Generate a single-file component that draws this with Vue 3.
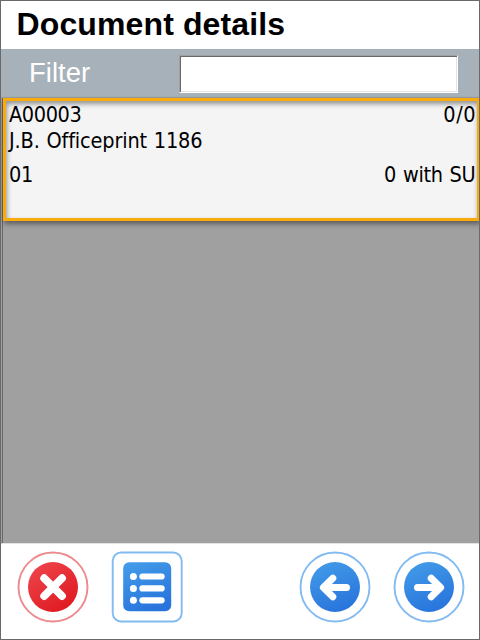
<script setup>
const rows = [
  { left: 'A00003', right: '0/0', kind: 'first' },
  { left: 'J.B. Officeprint 1186', right: '', kind: 'second' },
  { left: '01', right: '0 with SU', kind: 'third' },
]
</script>

<template>
  <div class="screen">
    <header class="title">Document details</header>
    <div class="filter">
      <label class="filter-label" for="filter">Filter</label>
      <input id="filter" class="filter-input" type="text" />
    </div>
    <main class="list">
      <div class="card">
        <div v-for="row in rows" :key="row.kind" class="row" :class="row.kind">
          <span>{{ row.left }}</span>
          <span class="right">{{ row.right }}</span>
        </div>
      </div>
    </main>
    <footer class="actions">
      <svg width="0" height="0" class="defs">
        <defs>
          <linearGradient id="red" x1="0" y1="0" x2="0.7" y2="1">
            <stop offset="0" stop-color="#f0484e" />
            <stop offset="1" stop-color="#df1a22" />
          </linearGradient>
          <linearGradient id="blue" x1="0.2" y1="0" x2="0.6" y2="1">
            <stop offset="0" stop-color="#429be8" />
            <stop offset="1" stop-color="#2874dc" />
          </linearGradient>
        </defs>
      </svg>
      <button class="action" aria-label="Cancel">
        <svg viewBox="0 0 72 72">
          <circle cx="36" cy="36" r="34.5" fill="#fff" stroke="#ed8a8e" stroke-width="1.9" />
          <circle cx="36" cy="36" r="25" fill="url(#red)" />
          <path d="M27.2 27.2L45 45M45 27.2L27.2 45" class="cross" />
        </svg>
      </button>
      <button class="action list-btn" aria-label="List">
        <svg viewBox="0 0 72 72">
          <rect x="1.7" y="1.5" width="69" height="69" rx="8.5" fill="#fff" stroke="#82bbf1" stroke-width="1.9" />
          <rect x="12.2" y="11.2" width="48" height="49" rx="6" fill="url(#blue)" />
          <g fill="#fff">
            <circle cx="22.4" cy="25.5" r="3.5" /><circle cx="22.4" cy="37.4" r="3.5" /><circle cx="22.4" cy="49.3" r="3.5" />
            <rect x="28.3" y="22.4" width="25.4" height="6.2" rx="3.1" />
            <rect x="28.3" y="34.3" width="25.4" height="6.2" rx="3.1" />
            <rect x="28.3" y="46.2" width="25.4" height="6.2" rx="3.1" />
          </g>
        </svg>
      </button>
      <button class="action back" aria-label="Back">
        <svg viewBox="0 0 72 72">
          <circle cx="36" cy="36" r="34.5" fill="#fff" stroke="#82bbf1" stroke-width="1.9" />
          <circle cx="36" cy="36" r="25" fill="url(#blue)" />
          <path d="M47.5 36.5H25M33.8 27.3L24.4 36.5L33.8 45.7" class="arrow" />
        </svg>
      </button>
      <button class="action next" aria-label="Next">
        <svg viewBox="0 0 72 72">
          <circle cx="36" cy="36" r="34.5" fill="#fff" stroke="#82bbf1" stroke-width="1.9" />
          <circle cx="36" cy="36" r="25" fill="url(#blue)" />
          <path d="M24.5 36.5H47M38.2 27.3L47.6 36.5L38.2 45.7" class="arrow" />
        </svg>
      </button>
    </footer>
  </div>
</template>

<style>
body {
  margin: 0;
  background: #fff;
}
</style>

<style scoped>
.screen {
  box-sizing: border-box;
  width: 480px;
  height: 640px;
  border: 1px solid #696969;
  display: flex;
  flex-direction: column;
  overflow: hidden;
  background: #fff;
  font-family: "Liberation Sans", sans-serif;
}
.title {
  height: 48px;
  box-sizing: border-box;
  padding-left: 15.5px;
  font-size: 32px;
  font-weight: bold;
  line-height: 46px;
  letter-spacing: 0.12px;
  color: #000;
}
.filter {
  height: 48px;
  box-sizing: border-box;
  display: flex;
  align-items: flex-start;
  padding: 6px 0 0 28px;
  background: #a7b1b9;
}
.filter-label {
  width: 150px;
  font-size: 27.5px;
  line-height: 35px;
  color: #fff;
}
.filter-input {
  box-sizing: border-box;
  width: 279px;
  height: 38px;
  padding: 0 6px;
  border: 1px solid;
  border-color: #a0a0a0 #fff #fff #a0a0a0;
  border-radius: 0;
  background: #fff;
  box-shadow: inset 1px 1px #696969, inset -1px -1px #e3e3e3;
  font-size: 24px;
  outline: none;
}
.list {
  height: 447px;
  box-sizing: border-box;
  border-top: 1px solid #9b9da0;
  border-left: 1px solid #a0a0a0;
  border-bottom: 1px solid #e3e3e3;
  background: #a0a0a0;
  box-shadow: inset 1px 0 #696969;
  padding-left: 1px;
}
.card {
  box-sizing: border-box;
  width: 477px;
  height: 123px;
  border: 3px solid #faab0c;
  background: #f4f4f4;
  padding: 0 1px 0 3px;
  box-shadow: 1px 3px 5px rgba(0, 0, 0, 0.42), inset 1px 3px 5px rgba(0, 0, 0, 0.4);
  font-family: "DejaVu Sans Condensed", "DejaVu Sans", sans-serif;
  font-stretch: condensed;
  font-size: 21.5px;
  letter-spacing: -0.4px;
  color: #000;
}
.row {
  display: flex;
  justify-content: space-between;
  height: 26px;
  line-height: 27px;
  white-space: nowrap;
}
.second {
  letter-spacing: -0.15px;
  word-spacing: 0.8px;
}
.third {
  margin-top: 8px;
}
.right {
  margin-right: 0.6px;
}
.first .right {
  letter-spacing: 0.5px;
  margin-right: 0;
}
.third .right {
  letter-spacing: -0.3px;
  word-spacing: 1px;
}
.actions {
  flex: 1;
  display: flex;
  align-items: flex-start;
  padding: 7px 0 0 16px;
}
.defs {
  position: absolute;
}
.action {
  width: 72px;
  height: 72px;
  padding: 0;
  border: 0;
  background: none;
}
.action svg {
  display: block;
  width: 72px;
  height: 72px;
}
.list-btn {
  margin-left: 22px;
}
.back {
  margin-left: 116px;
}
.next {
  margin-left: 22px;
}
.cross {
  fill: none;
  stroke: #fff;
  stroke-width: 7.8;
  stroke-linecap: round;
}
.arrow {
  fill: none;
  stroke: #fff;
  stroke-width: 7;
  stroke-linecap: round;
  stroke-linejoin: round;
}
</style>
